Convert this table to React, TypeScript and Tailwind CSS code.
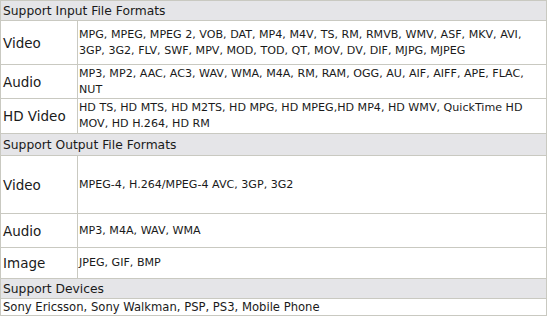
const inputRows = [
  {
    label: "Video",
    h: "h-[44px]",
    value:
      "MPG, MPEG, MPEG 2, VOB, DAT, MP4, M4V, TS, RM, RMVB, WMV, ASF, MKV, AVI, 3GP, 3G2, FLV, SWF, MPV, MOD, TOD, QT, MOV, DV, DIF, MJPG, MJPEG",
  },
  {
    label: "Audio",
    h: "h-[34px]",
    value:
      "MP3, MP2, AAC, AC3, WAV, WMA, M4A, RM, RAM, OGG, AU, AIF, AIFF, APE, FLAC, NUT",
  },
  {
    label: "HD Video",
    h: "h-[35px]",
    value:
      "HD TS, HD MTS, HD M2TS, HD MPG, HD MPEG,HD MP4, HD WMV, QuickTime HD MOV, HD H.264, HD RM",
  },
];

const outputRows = [
  { label: "Video", h: "h-[58px]", value: "MPEG-4, H.264/MPEG-4 AVC, 3GP, 3G2" },
  { label: "Audio", h: "h-[34px]", value: "MP3, M4A, WAV, WMA" },
  { label: "Image", h: "h-[31px]", value: "JPEG, GIF, BMP" },
];

function Header({ title, h }: { title: string; h: string }) {
  return (
    <tr className={h}>
      <td
        colSpan={2}
        className="border border-[#c9c9c1] bg-[#e5e5e8] px-[2px] py-0 text-[12.3px] leading-[16px] align-middle"
      >
        {title}
      </td>
    </tr>
  );
}

function Row({ label, value, h }: { label: string; value: string; h: string }) {
  return (
    <tr className={h}>
      <td className="border border-[#c9c9c1] px-[2px] py-0 text-[13.5px] leading-[16px] align-middle">
        {label}
      </td>
      <td className="border border-[#c9c9c1] pl-[1px] pr-[2px] py-0 text-[11.1px] leading-[16px] align-middle">
        {value}
      </td>
    </tr>
  );
}

export default function App() {
  return (
    <div className="w-[550px] h-[318px] bg-white font-['DejaVu_Sans',Verdana,sans-serif] text-[#1a1a1a]">
      <table className="w-[547px] border-collapse table-fixed">
        <colgroup>
          <col className="w-[77px]" />
          <col />
        </colgroup>
        <tbody>
          <Header title="Support Input File Formats" h="h-[20px]" />
          {inputRows.map((r) => (
            <Row key={"i" + r.label} {...r} />
          ))}
          <Header title="Support Output File Formats" h="h-[22px]" />
          {outputRows.map((r) => (
            <Row key={"o" + r.label} {...r} />
          ))}
          <Header title="Support Devices" h="h-[20px]" />
          <tr className="h-[17px]">
            <td
              colSpan={2}
              className="border border-[#c9c9c1] px-[2px] py-0 text-[11.6px] leading-[14px] align-middle"
            >
              Sony Ericsson, Sony Walkman, PSP, PS3, Mobile Phone
            </td>
          </tr>
        </tbody>
      </table>
    </div>
  );
}
